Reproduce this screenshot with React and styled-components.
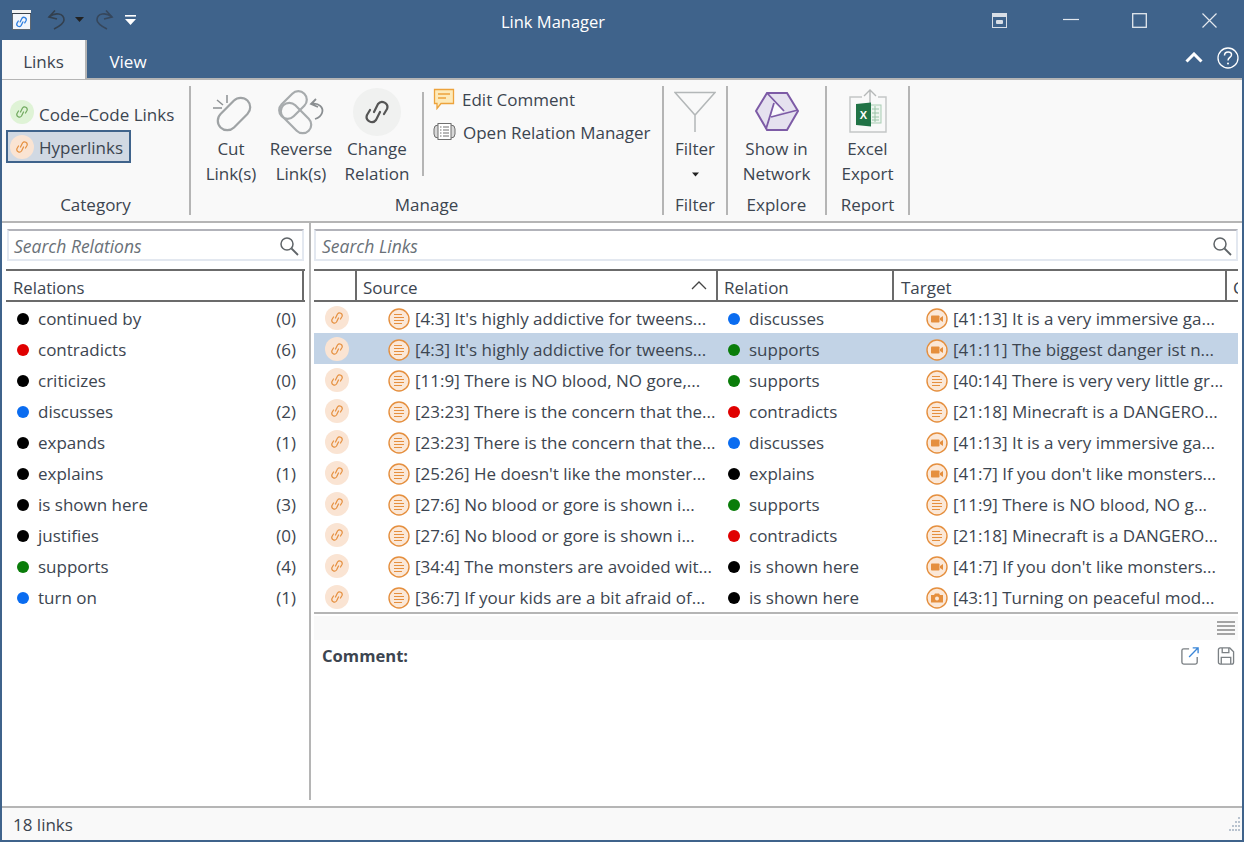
import React from 'react';
import styled, { createGlobalStyle } from 'styled-components';

const GlobalStyle = createGlobalStyle`
    html, body { margin: 0; padding: 0; background: #fff; }
    body { font-family: "Open Sans", "Noto Sans", "Liberation Sans", sans-serif; font-size: 17px; color: #3c4550; }
`;

const BLUE = '#3f638b';
const LINE = '#b5b5b5';
const HEAD = '#6b6b6b';

const Window = styled.div`
    width: 1244px;
    height: 842px;
    box-sizing: border-box;
    border: 2px solid ${BLUE};
    display: flex;
    flex-direction: column;
    overflow: hidden;
    background: #fff;
`;

const TitleBar = styled.div`
    height: 38px;
    flex: none;
    display: flex;
    align-items: center;
    background: ${BLUE};
`;

const Qat = styled.div`
    width: 138px;
    flex: none;
    display: flex;
    align-items: center;
    padding-left: 10px;
    box-sizing: border-box;
    margin-top: -3px;
`;

const QatSlot = styled.div`
    display: flex;
    margin-left: ${p => p.$ml || 0}px;
`;

const Title = styled.div`
    flex: 1;
    text-align: center;
    color: #fff;
    font-size: 16.5px;
`;

const Controls = styled.div`
    width: 276px;
    flex: none;
    box-sizing: border-box;
    padding-left: 26px;
    display: flex;
    align-items: center;
    margin-top: -2px;
`;

const Control = styled.div`
    display: flex;
    margin-left: ${p => p.$ml || 0}px;
`;

const TabRow = styled.div`
    height: 38px;
    flex: none;
    display: flex;
    align-items: stretch;
    background: ${BLUE};
    border-bottom: 2px solid ${LINE};
`;

const Tab = styled.div`
    width: ${p => p.$active ? 85 : 82}px;
    height: 39px;
    box-sizing: border-box;
    display: flex;
    align-items: center;
    justify-content: center;
    font-size: 17px;
    color: ${p => p.$active ? '#3c4550' : '#fff'};
    background: ${p => p.$active ? '#f9f9f9' : 'transparent'};
    border-right: ${p => p.$active ? `2px solid ${LINE}` : 'none'};
    padding-top: 4px;
`;

const TabRight = styled.div`
    margin-left: auto;
    display: flex;
    align-items: center;
    gap: 14px;
    padding-right: 3px;
    padding-bottom: 3px;
`;

const Ribbon = styled.div`
    flex: none;
    display: flex;
    padding: 6px 0;
    height: 129px;
    background: #f9f9f9;
    border-bottom: 2px solid ${LINE};
`;

const Group = styled.div`
    width: ${p => p.$w}px;
    flex: none;
    box-sizing: border-box;
    border-right: 2px solid ${LINE};
    display: flex;
    flex-direction: column;
`;

const GroupBody = styled.div`
    flex: 1;
    display: flex;
    min-height: 0;
`;

const GroupLabel = styled.div`
    height: 26px;
    box-sizing: border-box;
    padding-top: 3px;
    line-height: 26px;
    text-align: center;
    font-size: 17px;
    flex: none;
`;

const CategoryList = styled.div`
    padding: 9px 0 0 4px;
    display: flex;
    flex-direction: column;
`;

const CategoryItem = styled.div`
    height: 33px;
    width: ${p => p.$selected ? 125 : 176}px;
    box-sizing: border-box;
    display: flex;
    align-items: center;
    gap: 5px;
    padding-left: ${p => p.$selected ? 2 : 4}px;
    border: ${p => p.$selected ? `2px solid ${BLUE}` : 'none'};
    background: ${p => p.$selected ? '#d1d9e3' : 'transparent'};
    margin-bottom: ${p => p.$selected ? 0 : 2}px;
    white-space: nowrap;
`;

const CategoryText = styled.span`
    padding-top: ${p => p.$pad}px;
`;

const BigButton = styled.div`
    width: ${p => p.$w}px;
    flex: none;
    display: flex;
    flex-direction: column;
    align-items: center;
    text-align: center;
    padding-top: 1px;
    line-height: 24.5px;
    white-space: nowrap;
`;

const BigIcon = styled.div`
    height: 50px;
    display: flex;
    align-items: center;
    justify-content: center;
`;

const FilterCaret = styled.span`
    line-height: 18px;
`;

const ManageBig = styled.div`
    display: flex;
    padding-left: 5px;
    width: 231px;
    box-sizing: border-box;
`;

const InnerSeparator = styled.div`
    width: 2px;
    height: 84px;
    margin-top: 6px;
    background: ${LINE};
    flex: none;
`;

const SmallList = styled.div`
    padding-left: 9px;
    display: flex;
    flex-direction: column;
    gap: 7px;
`;

const SmallItem = styled.div`
    height: 26px;
    display: flex;
    align-items: center;
    gap: 7px;
    white-space: nowrap;
`;

const Main = styled.div`
    flex: 1;
    min-height: 0;
    display: flex;
    padding-bottom: 6px;
`;

const LeftPane = styled.div`
    width: 309px;
    flex: none;
    box-sizing: border-box;
    border-right: 2px solid ${LINE};
    padding: 6px 5px 0 4px;
    display: flex;
    flex-direction: column;
`;

const RightPane = styled.div`
    flex: 1;
    min-width: 0;
    display: flex;
    flex-direction: column;
    padding: 6px 4px 0 3px;
`;

const Search = styled.div`
    height: 32px;
    box-sizing: border-box;
    flex: none;
    margin-left: ${p => p.$left ? 1 : 0}px;
    display: flex;
    align-items: center;
    justify-content: space-between;
    padding: 1px ${p => p.$left ? 3 : 4}px 0 ${p => p.$left ? 5 : 6}px;
    background: #fff;
    border: 2px solid #e3e8f0;
    border-top-color: #b2b3ba;
    font-style: italic;
    color: #6a7178;
    font-size: 17.5px;
`;

const ListHeader = styled.div`
    height: 33px;
    margin-top: 8px;
    box-sizing: border-box;
    flex: none;
    display: flex;
    align-items: center;
    padding: 4px 0 0 7px;
    border-top: 2px solid ${HEAD};
    border-bottom: 2px solid ${HEAD};
    position: relative;
    margin-right: -1px;
    font-size: 16.7px;
    &:after {
        content: '';
        position: absolute;
        right: 1px;
        top: 0;
        bottom: 0;
        width: 2px;
        background: ${HEAD};
    }
`;

const RelationRow = styled.div`
    height: 31px;
    box-sizing: border-box;
    display: flex;
    align-items: center;
    padding: 2px 8px 0 11px;
`;

const RelationName = styled.span`
    margin-left: 9px;
    flex: 1;
`;

const Dot = styled.span`
    width: 12px;
    height: 12px;
    border-radius: 50%;
    background: ${p => p.$color};
    flex: none;
`;

const COLS = '43px 361px 176px 333px 11px';

const TableHeader = styled.div`
    height: 33px;
    margin-top: 8px;
    box-sizing: border-box;
    flex: none;
    display: grid;
    grid-template-columns: ${COLS};
    border-top: 2px solid ${HEAD};
    border-bottom: 2px solid ${HEAD};
    overflow: hidden;
`;

const HeaderCell = styled.div`
    box-sizing: border-box;
    border-right: ${p => p.$last ? 'none' : `2px solid ${HEAD}`};
    display: flex;
    align-items: center;
    justify-content: space-between;
    padding: 4px 9px 0 ${p => p.$pad || 6}px;
    white-space: nowrap;
    overflow: hidden;
`;

const SortArrow = styled.svg`
    margin-top: -4px;
`;

const Rows = styled.div`
    flex: none;
    border-bottom: 2px solid ${LINE};
`;

const Row = styled.div`
    height: 31px;
    display: grid;
    grid-template-columns: ${COLS};
    align-items: center;
    background: ${p => p.$selected ? '#c2d3e6' : 'transparent'};
`;

const LinkCell = styled.div`
    padding-left: 11px;
    display: flex;
`;

const QuoteCell = styled.div`
    display: flex;
    align-items: center;
    gap: 5px;
    padding: 2px 0 0 ${p => p.$pad}px;
    white-space: nowrap;
    overflow: hidden;
`;

const RelationCell = styled.div`
    display: flex;
    align-items: center;
    gap: 9px;
    padding: 2px 0 0 10px;
    white-space: nowrap;
`;

const Circle = styled.div`
    width: ${p => p.$size || 24}px;
    height: ${p => p.$size || 24}px;
    border-radius: 50%;
    background: ${p => p.$bg};
    display: flex;
    align-items: center;
    justify-content: center;
    flex: none;
`;

const IconBar = styled.div`
    height: 24px;
    margin-top: 2px;
    flex: none;
    background: #f9f9f9;
    display: flex;
    align-items: center;
    justify-content: flex-end;
    padding-right: 3px;
`;

const CommentRow = styled.div`
    display: flex;
    justify-content: space-between;
    align-items: center;
    height: 29px;
    padding: 1px 3px 0 8px;
    font-weight: 700;
    font-size: 16.6px;
`;

const CommentActions = styled.div`
    display: flex;
    gap: 18px;
`;

const StatusBar = styled.div`
    height: 34px;
    flex: none;
    box-sizing: border-box;
    border-top: 2px solid ${LINE};
    background: #f9f9f9;
    display: flex;
    align-items: center;
    justify-content: space-between;
    padding: 0 1px 0 11px;
`;

// the chain glyph used all over the app: two hooked links leaning to the right
const LinkPath = ({ size = 14, color, width = 2.4 }) => (
    <svg width={size * 24 / 28} height={size} viewBox="0 0 24 28" fill="none" stroke={color} strokeWidth={width} strokeLinecap="round" strokeLinejoin="round">
        <path d="M9 14L13 6A5.200 5.200 0 0 1 22 11L19 16" />
        <path d="M15 14L11 22A5.200 5.200 0 0 1 2 17L5 12" />
    </svg>
);

const QuoteIcon = ({ kind }) => (
    <svg width="22" height="22" viewBox="0 0 22 22" style={{ flex: 'none' }}>
        <circle cx="11" cy="11" r="10" fill="#fbe8d8" stroke="#e58f3e" strokeWidth="1.4" />
        {kind === 'text' && (
            <g stroke="#e58f3e" strokeWidth="1.2">
                <path d="M6 6.500h8M6 9.500h10M6 12.500h10M6 15.500h8" />
            </g>
        )}
        {kind === 'video' && (
            <g fill="#e58f3e">
                <rect x="5" y="7.500" width="8.500" height="7" rx="0.8" />
                <path d="M14 10l3-2v6l-3-2z" />
            </g>
        )}
        {kind === 'photo' && (
            <g fill="#e58f3e">
                <path d="M5 8h3l1-1.500h4L14 8h3v7.500H5z" />
                <circle cx="11" cy="11.500" r="2" fill="#fbe8d8" />
            </g>
        )}
    </svg>
);

const WindowIcon = () => (
    <svg width="19" height="20" viewBox="0 0 19 20">
        <rect x="0.500" y="0.500" width="18" height="19" fill="#f2f5fa" stroke="#5d6670" />
        <rect x="0" y="0" width="19" height="3" fill="#f2f2f2" />
        <rect x="0" y="3" width="19" height="1" fill="#39424c" />
        <g transform="translate(4 5.500) scale(.46)" fill="none" stroke="#2f7fe0" strokeWidth="2.800" strokeLinecap="round">
            <path d="M9 14L13 6A5.200 5.200 0 0 1 22 11L19 16" />
            <path d="M15 14L11 22A5.200 5.200 0 0 1 2 17L5 12" />
        </g>
    </svg>
);

const UndoIcon = ({ flip }) => (
    <svg width="18" height="20" viewBox="0 0 18 20" fill="none" stroke={flip ? '#36475c' : '#33404f'} strokeWidth="1.600" style={flip ? { transform: 'scaleX(-1)' } : undefined}>
        <path d="M8 0.500L2 7L10 9" />
        <path d="M2 7C8 2 17 3 17 10C17 14 11 17 7 19" />
    </svg>
);

const Caret = ({ color = '#222', w = 9 }) => (
    <svg width={w} height="5" viewBox="0 0 9 5"><path d="M0 0h9L4.500 5z" fill={color} /></svg>
);

const CutIcon = () => (
    <svg width="48" height="48" viewBox="0 0 48 48" fill="none">
        <rect x="8" y="16.500" width="38" height="19" rx="9.500" stroke="#9fa3a5" strokeWidth="2.200" transform="rotate(-45 27 26)" />
        <path d="M20 7v8M6 20h9M10 12l6 5" stroke="#8c9092" strokeWidth="1.500" />
    </svg>
);

const ReverseIcon = () => (
    <svg width="48" height="48" viewBox="0 0 48 48" fill="none">
        <rect x="0" y="8.500" width="32" height="17" rx="8.500" stroke="#a7abad" strokeWidth="2.200" transform="rotate(-45 16 17)" />
        <rect x="1" y="21.500" width="36" height="17" rx="8.500" stroke="#a7abad" strokeWidth="2.200" transform="rotate(45 19 30)" />
        <path d="M39 11L34 16L41 19M34 16C42 14 47 20 45 25C44 28 41 30 38 31" stroke="#8a8e91" strokeWidth="1.800" />
    </svg>
);

const HexIcon = () => (
    <svg width="44" height="40" viewBox="0 0 44 40">
        <path d="M12 1h20l11 18-11 19H12L1 19z" fill="#e5e1ef" stroke="#7d5ba6" strokeWidth="2" />
        <path d="M19 11L29 19L16 25z" fill="#fbfafd" />
        <path d="M12 1L29 19M43 18L16 25M19 11L11 37" fill="none" stroke="#7d5ba6" strokeWidth="1.800" />
    </svg>
);

const ExcelIcon = () => (
    <svg width="40" height="46" viewBox="0 0 40 46">
        <path d="M14 8H2v35h36V8H30" fill="none" stroke="#c3c6c6" strokeWidth="1.400" />
        <path d="M22 15V1M16 7l6-6 6 6" fill="none" stroke="#b5b8b8" strokeWidth="1.400" />
        <rect x="22" y="16" width="11" height="18" fill="#eef5ef" stroke="#a9cdb4" />
        <path d="M24 20h7M24 24h7M24 28h7M24 31h7M27 17v16" stroke="#9cc4a9" />
        <path d="M8 15l15-1.500v24L8 36z" fill="#217346" />
        <text x="15.500" y="30" fontSize="11" fontWeight="700" textAnchor="middle" fill="#fff" fontFamily="Liberation Sans, sans-serif">X</text>
    </svg>
);

const SearchGlass = () => (
    <svg width="20" height="20" viewBox="0 0 20 20" fill="none" stroke="#5f6468" strokeWidth="1.500">
        <circle cx="8" cy="8" r="6" />
        <path d="M12.500 12.500L19 19" strokeWidth="1.800" />
    </svg>
);

const relations = [
    ['continued by', 0, '#000'], ['contradicts', 6, '#e00000'], ['criticizes', 0, '#000'],
    ['discusses', 2, '#0a6cf0'], ['expands', 1, '#000'], ['explains', 1, '#000'],
    ['is shown here', 3, '#000'], ['justifies', 0, '#000'], ['supports', 4, '#0a7d0a'], ['turn on', 1, '#0a6cf0'],
];

const colorOf = name => relations.find(r => r[0] === name)[2];

const links = [
    ["[4:3] It's highly addictive for tweens...", 'discusses', 'video', '[41:13] It is a very immersive ga...'],
    ["[4:3] It's highly addictive for tweens...", 'supports', 'video', '[41:11] The biggest danger ist n...'],
    ['[11:9] There is NO blood, NO gore,...', 'supports', 'text', '[40:14] There is very very little gr...'],
    ['[23:23] There is the concern that the...', 'contradicts', 'text', '[21:18] Minecraft is a DANGERO...'],
    ['[23:23] There is the concern that the...', 'discusses', 'video', '[41:13] It is a very immersive ga...'],
    ["[25:26] He doesn't like the monster...", 'explains', 'video', "[41:7] If you don't like monsters..."],
    ['[27:6] No blood or gore is shown i...', 'supports', 'text', '[11:9] There is NO blood, NO g...'],
    ['[27:6] No blood or gore is shown i...', 'contradicts', 'text', '[21:18] Minecraft is a DANGERO...'],
    ['[34:4] The monsters are avoided wit...', 'is shown here', 'video', "[41:7] If you don't like monsters..."],
    ['[36:7] If your kids are a bit afraid of...', 'is shown here', 'photo', '[43:1] Turning on peaceful mod...'],
];

const App = () => (
    <>
        <GlobalStyle />
        <Window>
            <TitleBar>
                <Qat>
                    <WindowIcon />
                    <QatSlot $ml={16}><UndoIcon /></QatSlot>
                    <QatSlot $ml={10}><Caret /></QatSlot>
                    <QatSlot $ml={12}><UndoIcon flip /></QatSlot>
                    <QatSlot $ml={11}>
                        <svg width="11" height="10" viewBox="0 0 11 10" fill="#fff"><rect width="11" height="1.600" /><path d="M0 4h11L5.500 10z" /></svg>
                    </QatSlot>
                </Qat>
                <Title>Link Manager</Title>
                <Controls>
                    <Control>
                        <svg width="15" height="15" viewBox="0 0 15 15"><rect width="15" height="15" fill="#d8dee6" /><rect x="1" y="4" width="13" height="10" fill={BLUE} /><rect x="4" y="7" width="7" height="4" rx="1" fill="#d8dee6" /></svg>
                    </Control>
                    <Control $ml={56}>
                        <svg width="16" height="15" viewBox="0 0 16 15"><path d="M0 6.500h16" stroke="#e3e8ee" strokeWidth="1.200" /></svg>
                    </Control>
                    <Control $ml={53}>
                        <svg width="15" height="15" viewBox="0 0 15 15" fill="none"><rect x="0.700" y="0.700" width="13.600" height="13.600" stroke="#e3e8ee" strokeWidth="1.300" /></svg>
                    </Control>
                    <Control $ml={55}>
                        <svg width="15" height="15" viewBox="0 0 15 15"><path d="M0.500 0.500l14 14M14.500 0.500l-14 14" stroke="#e3e8ee" strokeWidth="1.200" /></svg>
                    </Control>
                </Controls>
            </TitleBar>
            <TabRow>
                <Tab $active>Links</Tab>
                <Tab>View</Tab>
                <TabRight>
                    <svg width="18" height="11" viewBox="0 0 18 11" fill="none"><path d="M1.500 9.500L9 2l7.500 7.500" stroke="#fff" strokeWidth="3" /></svg>
                    <svg width="22" height="22" viewBox="0 0 22 22" fill="none">
                        <circle cx="11" cy="11" r="10" stroke="#fff" strokeWidth="1.300" />
                        <path d="M7.500 8.500c0-5 7.500-4.500 7-.5-.3 2.500-3.500 2.500-3.500 5.500" stroke="#fff" strokeWidth="1.500" />
                        <circle cx="11" cy="16.500" r="1" fill="#fff" />
                    </svg>
                </TabRight>
            </TabRow>
            <Ribbon>
                <Group $w={189}>
                    <GroupBody>
                        <CategoryList>
                            <CategoryItem>
                                <Circle $bg="#dff3d6"><LinkPath size={14} color="#6fa85c" /></Circle>
                                <CategoryText $pad={6}>Code–Code Links</CategoryText>
                            </CategoryItem>
                            <CategoryItem $selected>
                                <Circle $bg="#fae4d3"><LinkPath size={14} color="#e58f3e" /></Circle>
                                <CategoryText $pad={2}>Hyperlinks</CategoryText>
                            </CategoryItem>
                        </CategoryList>
                    </GroupBody>
                    <GroupLabel>Category</GroupLabel>
                </Group>
                <Group $w={473}>
                    <GroupBody>
                        <ManageBig>
                            <BigButton $w={70}><BigIcon><CutIcon /></BigIcon>Cut<br />Link(s)</BigButton>
                            <BigButton $w={70}><BigIcon><ReverseIcon /></BigIcon>Reverse<br />Link(s)</BigButton>
                            <BigButton $w={82}>
                                <BigIcon><Circle $bg="#f0f1f0" $size={48}><LinkPath size={28} color="#555" width={2.2} /></Circle></BigIcon>
                                Change<br />Relation
                            </BigButton>
                        </ManageBig>
                        <InnerSeparator />
                        <SmallList>
                            <SmallItem>
                                <svg width="22" height="22" viewBox="0 0 22 22">
                                    <path d="M1.500 1.500h19v14H8l-4 5v-5H1.500z" fill="#fdeaba" stroke="#eda33c" strokeWidth="1.300" />
                                    <path d="M5 6h12M5 10h8" stroke="#eda33c" strokeWidth="1.300" />
                                </svg>
                                Edit Comment
                            </SmallItem>
                            <SmallItem>
                                <svg width="23" height="20" viewBox="0 0 23 20">
                                    <rect x="1" y="3" width="21" height="13" rx="4" fill="#d8d8d8" stroke="#6f6f6f" />
                                    <rect x="5" y="1.500" width="13" height="16" fill="#fff" stroke="#6f6f6f" />
                                    <path d="M7 5h1.500M10 5h6M7 8h1.500M10 8h6M7 11h1.500M10 11h6M7 14h1.500M10 14h6" stroke="#6f6f6f" />
                                </svg>
                                Open Relation Manager
                            </SmallItem>
                        </SmallList>
                    </GroupBody>
                    <GroupLabel>Manage</GroupLabel>
                </Group>
                <Group $w={64}>
                    <GroupBody>
                        <BigButton $w={62}>
                            <BigIcon>
                                <svg width="42" height="42" viewBox="0 0 42 42" fill="none" stroke="#b3b7b8" strokeWidth="1.500"><path d="M1 1.500h40L21 24zM21 24v17" /></svg>
                            </BigIcon>
                            Filter
                            <FilterCaret><Caret w={7} /></FilterCaret>
                        </BigButton>
                    </GroupBody>
                    <GroupLabel>Filter</GroupLabel>
                </Group>
                <Group $w={99}>
                    <GroupBody>
                        <BigButton $w={97}><BigIcon><HexIcon /></BigIcon>Show in<br />Network</BigButton>
                    </GroupBody>
                    <GroupLabel>Explore</GroupLabel>
                </Group>
                <Group $w={83}>
                    <GroupBody>
                        <BigButton $w={81}><BigIcon><ExcelIcon /></BigIcon>Excel<br />Export</BigButton>
                    </GroupBody>
                    <GroupLabel>Report</GroupLabel>
                </Group>
            </Ribbon>
            <Main>
                <LeftPane>
                    <Search $left>Search Relations<SearchGlass /></Search>
                    <ListHeader>Relations</ListHeader>
                    {relations.map(([name, count, color]) => (
                        <RelationRow key={name}>
                            <Dot $color={color} />
                            <RelationName>{name}</RelationName>
                            <span>({count})</span>
                        </RelationRow>
                    ))}
                </LeftPane>
                <RightPane>
                    <Search>Search Links<SearchGlass /></Search>
                    <TableHeader>
                        <HeaderCell />
                        <HeaderCell>
                            Source
                            <SortArrow width="16" height="9" viewBox="0 0 16 9" fill="none"><path d="M1 8l7-7 7 7" stroke="#444" strokeWidth="1.300" /></SortArrow>
                        </HeaderCell>
                        <HeaderCell>Relation</HeaderCell>
                        <HeaderCell $pad={7}>Target</HeaderCell>
                        <HeaderCell $last>C</HeaderCell>
                    </TableHeader>
                    <Rows>
                        {links.map((link, i) => (
                            <Row key={i} $selected={i === 1}>
                                <LinkCell><Circle $bg="#fae4d3"><LinkPath size={14} color="#e58f3e" /></Circle></LinkCell>
                                <QuoteCell $pad={31}><QuoteIcon kind="text" />{link[0]}</QuoteCell>
                                <RelationCell><Dot $color={colorOf(link[1])} />{link[1]}</RelationCell>
                                <QuoteCell $pad={32}><QuoteIcon kind={link[2]} />{link[3]}</QuoteCell>
                            </Row>
                        ))}
                    </Rows>
                    <IconBar>
                        <svg width="18" height="16" viewBox="0 0 18 16"><path d="M0 2h18M0 6h18M0 10h18M0 14h18" stroke="#888" strokeWidth="1.400" /></svg>
                    </IconBar>
                    <CommentRow>
                        Comment:
                        <CommentActions>
                            <svg width="18" height="18" viewBox="0 0 20 20" fill="none">
                                <path d="M9 2H3a2 2 0 0 0-2 2v13a2 2 0 0 0 2 2h13a2 2 0 0 0 2-2v-6" stroke="#7b8084" strokeWidth="1.500" />
                                <path d="M9 11L18.500 1.500M13 1h6v6" stroke="#3a86d8" strokeWidth="1.500" />
                            </svg>
                            <svg width="18" height="18" viewBox="0 0 18 19" fill="none" stroke="#7b8084" strokeWidth="1.400">
                                <path d="M1 3a2 2 0 0 1 2-2h10l4 4v11a2 2 0 0 1-2 2H3a2 2 0 0 1-2-2z" />
                                <path d="M5 1v5h7V1M4 18v-7h10v7" />
                            </svg>
                        </CommentActions>
                    </CommentRow>
                </RightPane>
            </Main>
            <StatusBar>
                18 links
                <svg width="16" height="16" viewBox="0 0 16 16" fill="#b9c3cf">
                    <rect x="13" y="1" width="2" height="2" /><rect x="10" y="5" width="2" height="2" /><rect x="13" y="5" width="2" height="2" />
                    <rect x="7" y="9" width="2" height="2" /><rect x="10" y="9" width="2" height="2" /><rect x="13" y="9" width="2" height="2" />
                    <rect x="4" y="13" width="2" height="2" /><rect x="7" y="13" width="2" height="2" /><rect x="10" y="13" width="2" height="2" /><rect x="13" y="13" width="2" height="2" />
                </svg>
            </StatusBar>
        </Window>
    </>
);

export default App;
